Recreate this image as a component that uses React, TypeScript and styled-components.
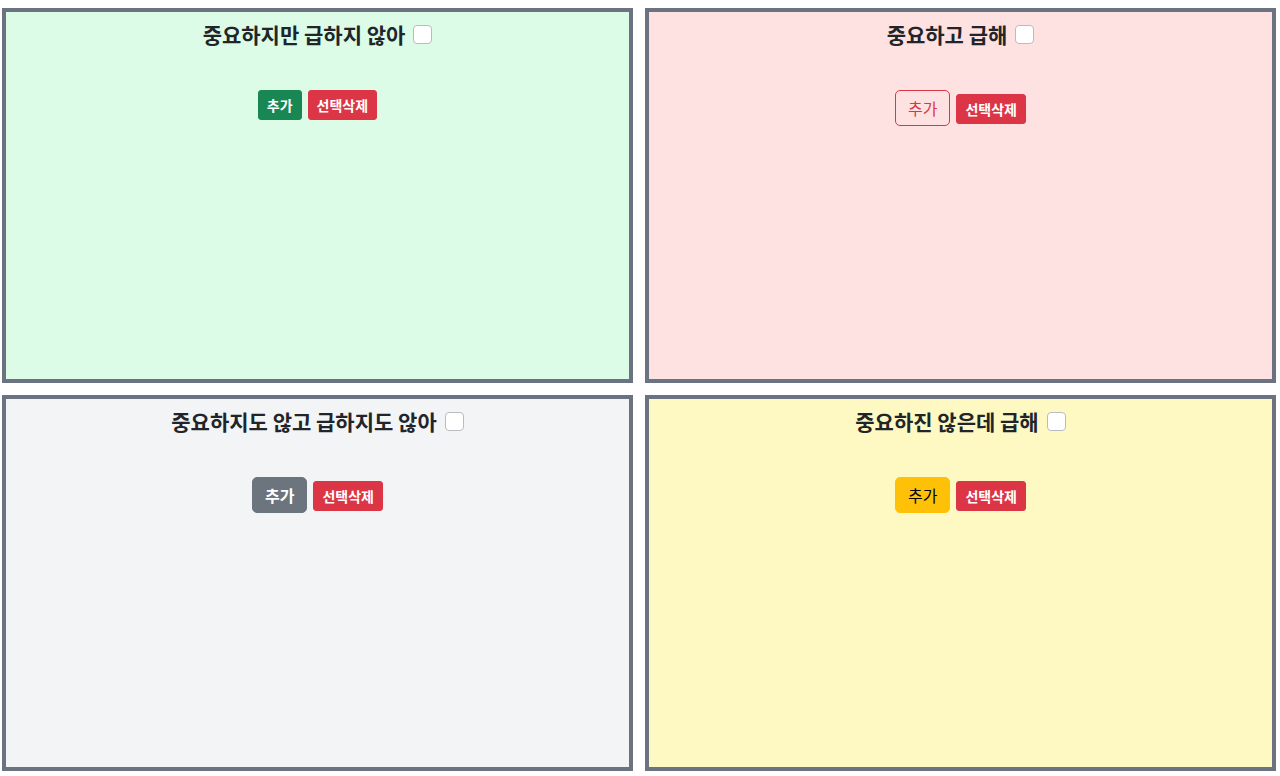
import React from "react";
import styled, { createGlobalStyle, css } from "styled-components";

const GlobalStyle = createGlobalStyle`
  html, body { margin: 0; padding: 0; background: #ffffff; }
  body { font-family: "Noto Sans CJK KR", "Noto Sans", sans-serif; color: #212529; }
`;

const Board = styled.div`
  display: grid;
  grid-template-columns: 1fr 1fr;
  grid-template-rows: 375px 376px;
  gap: 12px;
  padding: 8px 4px 5px 2px;
`;

type Tone = "green" | "red" | "gray" | "yellow";

const bg: Record<Tone, string> = {
  green: "#dcfce7",
  red: "#fee2e2",
  gray: "#f3f4f6",
  yellow: "#fef9c3",
};

const Quadrant = styled.section<{ $tone: Tone }>`
  border: 4px solid #6b7280;
  background: ${(p) => bg[p.$tone]};
  padding-top: 10px;
  display: flex;
  flex-direction: column;
  align-items: center;
`;

const Header = styled.div`
  display: flex;
  align-items: center;
  justify-content: center;
  gap: 8px;
`;

const Title = styled.h5`
  margin: 0;
  font-size: 21px;
  font-weight: 700;
  line-height: 1.2;
  color: #212529;
`;

const Check = styled.input.attrs({ type: "checkbox" })`
  appearance: none;
  margin: 0;
  width: 19px;
  height: 19px;
  border: 1px solid #b8bcc0;
  border-radius: 4px;
  background: #ffffff;
`;

const Actions = styled.div`
  margin-top: 43px;
  display: flex;
  align-items: baseline;
  justify-content: center;
  gap: 6px;
`;

type Variant = "success" | "danger" | "outlineDanger" | "secondary" | "warning";

const variants: Record<Variant, ReturnType<typeof css>> = {
  success: css`background: #198754; border-color: #198754; color: #fff;`,
  danger: css`background: #dc3545; border-color: #dc3545; color: #fff;`,
  outlineDanger: css`background: transparent; border-color: #dc3545; color: #dc3545;`,
  secondary: css`background: #6c757d; border-color: #6c757d; color: #fff;`,
  warning: css`background: #ffc107; border-color: #ffc107; color: #000;`,
};

const Button = styled.button<{ $variant: Variant; $size: "sm" | "md"; $bold?: boolean }>`
  font-family: "Noto Sans CJK KR", "Noto Sans", sans-serif;
  border: 1px solid transparent;
  cursor: pointer;
  ${(p) =>
    p.$size === "sm"
      ? css`
          font-size: 14px;
          line-height: 20px;
          padding: 4px 8px;
          border-radius: 3px;
          font-weight: 700;
        `
      : css`
          font-size: 16px;
          line-height: 22px;
          padding: 6px 12px;
          border-radius: 5px;
          font-weight: ${p.$bold ? 700 : 400};
        `}
  ${(p) => variants[p.$variant]}
`;

type Q = {
  title: string;
  tone: Tone;
  add: Variant;
  size: "sm" | "md";
  bold?: boolean;
};

const quads: Q[] = [
  { title: "중요하지만 급하지 않아", tone: "green", add: "success", size: "sm" },
  { title: "중요하고 급해", tone: "red", add: "outlineDanger", size: "md" },
  { title: "중요하지도 않고 급하지도 않아", tone: "gray", add: "secondary", size: "md", bold: true },
  { title: "중요하진 않은데 급해", tone: "yellow", add: "warning", size: "md" },
];

export default function App() {
  return (
    <>
      <GlobalStyle />
      <Board>
        {quads.map((q) => (
          <Quadrant key={q.title} $tone={q.tone}>
            <Header>
              <Title>{q.title}</Title>
              <Check />
            </Header>
            <Actions>
              <Button $variant={q.add} $size={q.size} $bold={q.bold}>
                추가
              </Button>
              <Button $variant="danger" $size="sm">
                선택삭제
              </Button>
            </Actions>
          </Quadrant>
        ))}
      </Board>
    </>
  );
}
